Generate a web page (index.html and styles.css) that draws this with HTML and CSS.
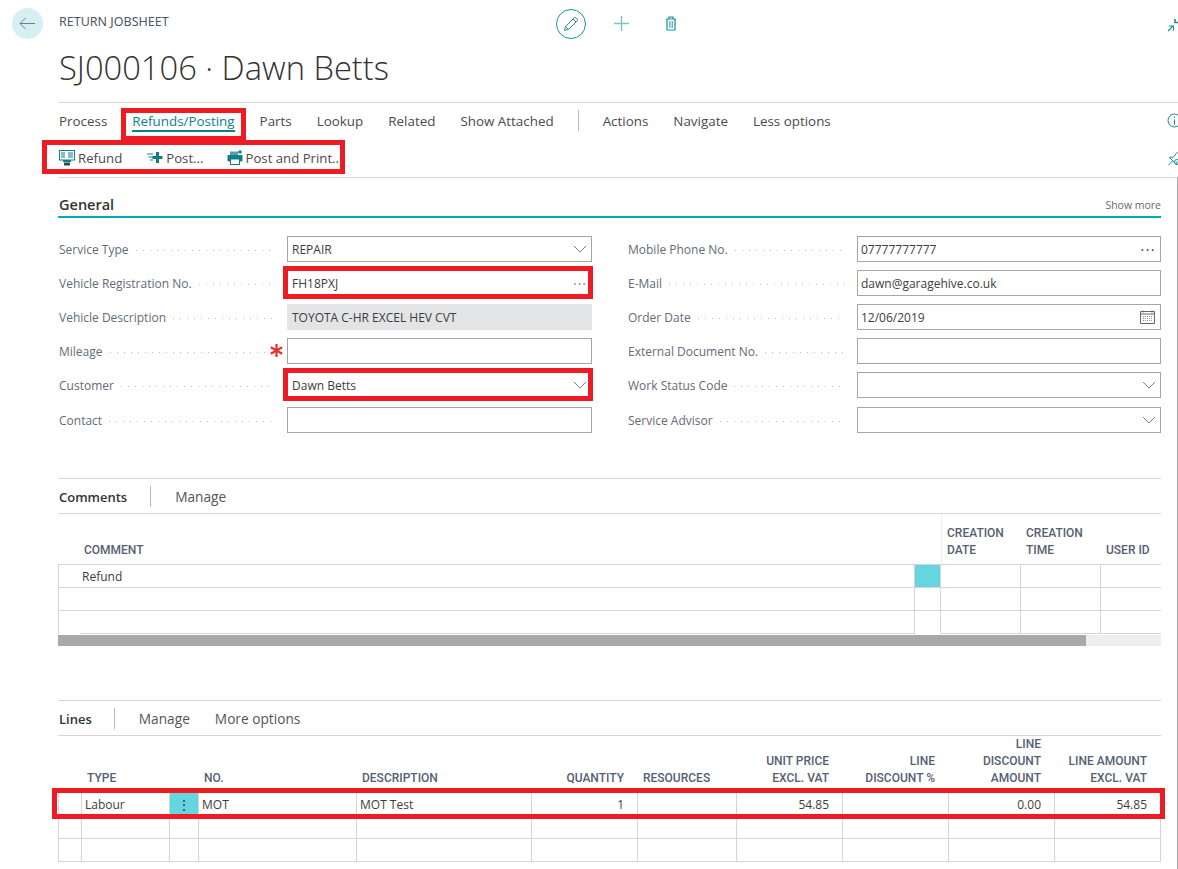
FILE: index.html
```html
<!DOCTYPE html>
<html lang="en">
<head>
    <meta charset="UTF-8">
    <meta name="viewport" content="width=device-width, initial-scale=1.0">
    <title>Return Jobsheet</title>
    <link rel="stylesheet" href="styles.css">
</head>
<body>
    <header class="head">
        <div class="head-top">
            <button class="back" type="button" aria-label="Back">
                <svg width="17" height="13" viewBox="0 0 17 13"><path d="M16 6.500H1M6.500 1 1 6.500 6.500 12" fill="none" stroke="#6f7f8c" stroke-width="1"/></svg>
            </button>
            <span class="crumb">RETURN JOBSHEET</span>
            <div class="head-actions">
                <span class="edit-ring">
                    <svg width="16" height="16" viewBox="0 0 16 16"><path d="M1.500 14.500 2.600 10.400 11.200 1.800a1.300 1.300 0 0 1 1.900 0l1.100 1.100a1.300 1.300 0 0 1 0 1.900L5.600 13.400ZM2.600 10.400l3 3M10 3l3 3" fill="none" stroke="#2f8f97" stroke-width="1"/></svg>
                </span>
                <svg class="act-plus" width="15" height="15" viewBox="0 0 15 15"><path d="M7.500 0v15M0 7.500h15" stroke="#7cc3c8" stroke-width="1.400"/></svg>
                <svg class="act-trash" width="12" height="15" viewBox="0 0 12 15"><path d="M1 3h10M4 3V1h4v2M2 3v11h8V3" fill="none" stroke="#1c8e97" stroke-width="1.200"/><path d="M4.500 5v7M6 5v7M7.500 5v7" stroke="#6db8be" stroke-width="1"/></svg>
            </div>
            <svg class="collapse" width="11" height="13" viewBox="0 0 11 13"><path d="M1 12 6 7M2 7h4.500v4.500" fill="none" stroke="#1c8e97" stroke-width="1.100"/><path d="M8 0v3.500h3" fill="none" stroke="#1c8e97" stroke-width="1.600"/></svg>
        </div>
        <h1>SJ000106 · Dawn Betts</h1>
    </header>

    <div class="menus">
        <nav class="tabs">
            <a>Process</a>
            <a class="tab-active">Refunds/Posting</a>
            <a>Parts</a>
            <a>Lookup</a>
            <a>Related</a>
            <a>Show Attached</a>
            <span class="tabs-sep"></span>
            <a>Actions</a>
            <a>Navigate</a>
            <a>Less options</a>
            <svg class="info" width="14" height="15" viewBox="0 0 14 15"><circle cx="7.500" cy="7.500" r="6.500" fill="none" stroke="#1c8e97" stroke-width="1"/><path d="M7.500 6.500v5M7.500 3.500v1.500" stroke="#1c8e97" stroke-width="1"/></svg>
        </nav>
        <div class="toolbar">
            <a class="tool">
                <svg width="16" height="16" viewBox="0 0 16 16"><rect x="0.500" y="0.500" width="15" height="9.500" fill="#fff" stroke="#0e7f88"/><path d="M2 3h4M2 5h4M2 7h4M9 3h5M9 5h5M9 7h5" stroke="#0e7f88"/><rect x="4" y="10" width="8" height="2" fill="#0e7f88"/><rect x="5" y="12.500" width="6" height="3" fill="#2b4a55"/></svg>
                Refund
            </a>
            <a class="tool tool-post">
                <svg width="16" height="13" viewBox="0 0 16 13"><path d="M0 3h6M1.500 6h4.500M3 9h3" stroke="#6aa9ae" stroke-width="1.300"/><path d="M10.500 1v11M5.500 6.500h10" stroke="#0e7f88" stroke-width="3"/></svg>
                Post...
            </a>
            <a class="tool tool-print">
                <svg width="16" height="15" viewBox="0 0 16 15"><rect x="3" y="1.500" width="8" height="4" fill="#5d9ea4"/><rect x="0.500" y="5" width="15" height="6.500" rx="1" fill="#0e7f88"/><rect x="3.500" y="9" width="9" height="5.500" fill="#fff" stroke="#0e7f88"/><path d="M13 0v4M11 2h4" stroke="#0e7f88" stroke-width="1.300"/></svg>
                Post and Print..
            </a>
            <svg class="pin" width="10" height="15" viewBox="0 0 10 15"><path d="M0 14.500 4.500 10M1.500 6.500l7 7M1.500 6.500l4 -.5L9.500 1M8.500 13.500l.5-3" fill="none" stroke="#1c8e97" stroke-width="1"/><circle cx="9" cy="11" r="2.500" fill="none" stroke="#1c8e97" stroke-width="1"/></svg>
        </div>
    </div>

    <main class="panel">
        <div class="section-head">
            <h2>General</h2>
            <a class="show-more">Show more</a>
        </div>

        <div class="fields">
            <div class="field">
                <label>Service Type</label>
                <div class="box"><span>REPAIR</span><svg class="chev" width="14" height="8" viewBox="0 0 14 8"><path d="M1 1l6 6 6-6" fill="none" stroke="#7a828d"/></svg></div>
            </div>
            <div class="field">
                <label>Mobile Phone No.</label>
                <div class="box"><span>07777777777</span><span class="more-dots">···</span></div>
            </div>
            <div class="field">
                <label>Vehicle Registration No.</label>
                <div class="box box-marked"><span>FH18PXJ</span><span class="more-dots dots-light">···</span></div>
            </div>
            <div class="field">
                <label>E-Mail</label>
                <div class="box"><span>dawn@garagehive.co.uk</span></div>
            </div>
            <div class="field">
                <label>Vehicle Description</label>
                <div class="box box-off"><span>TOYOTA C-HR EXCEL HEV CVT</span></div>
            </div>
            <div class="field">
                <label>Order Date</label>
                <div class="box"><span>12/06/2019</span>
                    <svg class="cal" width="15" height="14" viewBox="0 0 15 14"><path d="M.5 1.500h14v12H.5zM.5 4h14" fill="none" stroke="#5f6873"/><path d="M3 .5v2M12 .5v2" stroke="#5f6873"/><path d="M3 6.500h9M3 8.500h9M3 10.500h9" stroke="#8c939c" stroke-dasharray="1 1"/></svg>
                </div>
            </div>
            <div class="field">
                <label>Mileage</label>
                <div class="box">
                    <svg class="required" width="13" height="13" viewBox="0 0 13 13"><path d="M6.500 0v13M.8 3.200l11.400 6.600M.8 9.800l11.400-6.600" stroke="#e0352b" stroke-width="2.200"/></svg>
                </div>
            </div>
            <div class="field">
                <label>External Document No.</label>
                <div class="box"></div>
            </div>
            <div class="field">
                <label>Customer</label>
                <div class="box box-marked"><span>Dawn Betts</span><svg class="chev" width="14" height="8" viewBox="0 0 14 8"><path d="M1 1l6 6 6-6" fill="none" stroke="#7a828d"/></svg></div>
            </div>
            <div class="field">
                <label>Work Status Code</label>
                <div class="box"><span></span><svg class="chev" width="14" height="8" viewBox="0 0 14 8"><path d="M1 1l6 6 6-6" fill="none" stroke="#7a828d"/></svg></div>
            </div>
            <div class="field field-last">
                <label>Contact</label>
                <div class="box"></div>
            </div>
            <div class="field field-last">
                <label>Service Advisor</label>
                <div class="box"><span></span><svg class="chev" width="14" height="8" viewBox="0 0 14 8"><path d="M1 1l6 6 6-6" fill="none" stroke="#7a828d"/></svg></div>
            </div>
        </div>

        <section class="part part-comments">
            <div class="part-bar">
                <h3>Comments</h3>
                <span class="bar-sep"></span>
                <a>Manage</a>
            </div>
            <table class="grid grid-comments">
                <colgroup>
                    <col class="c-22"><col class="c-835"><col class="c-26"><col class="c-80"><col class="c-80"><col class="c-60">
                </colgroup>
                <thead>
                    <tr>
                        <th></th>
                        <th class="th-comment">COMMENT</th>
                        <th></th>
                        <th class="th-date">CREATION<br>DATE</th>
                        <th>CREATION<br>TIME</th>
                        <th>USER ID</th>
                    </tr>
                </thead>
                <tbody>
                    <tr><td></td><td class="td-comment">Refund</td><td class="td-teal"></td><td></td><td></td><td></td></tr>
                    <tr><td></td><td></td><td></td><td></td><td></td><td></td></tr>
                    <tr><td class="td-open"></td><td></td><td class="td-open"></td><td></td><td></td><td></td></tr>
                </tbody>
            </table>
            <div class="hscroll"><div class="hscroll-thumb"></div></div>
        </section>

        <section class="part part-lines">
            <div class="part-bar">
                <h3>Lines</h3>
                <span class="bar-sep"></span>
                <a>Manage</a>
                <a>More options</a>
            </div>
            <div class="lines-wrap">
                <table class="grid grid-lines">
                    <colgroup>
                        <col class="c-24"><col class="c-88"><col class="c-29"><col class="c-158"><col class="c-175"><col class="c-106"><col class="c-99"><col class="c-106"><col class="c-106"><col class="c-106"><col class="c-106">
                    </colgroup>
                    <thead>
                        <tr>
                            <th></th>
                            <th>TYPE</th>
                            <th></th>
                            <th>NO.</th>
                            <th>DESCRIPTION</th>
                            <th class="num">QUANTITY</th>
                            <th>RESOURCES</th>
                            <th class="num">UNIT PRICE<br>EXCL. VAT</th>
                            <th class="num">LINE<br>DISCOUNT %</th>
                            <th class="num">LINE<br>DISCOUNT<br>AMOUNT</th>
                            <th class="num">LINE AMOUNT<br>EXCL. VAT</th>
                        </tr>
                    </thead>
                    <tbody>
                        <tr>
                            <td></td>
                            <td>Labour</td>
                            <td class="td-teal td-menu">⋮</td>
                            <td>MOT</td>
                            <td>MOT Test</td>
                            <td class="num">1</td>
                            <td></td>
                            <td class="num">54.85</td>
                            <td></td>
                            <td class="num">0.00</td>
                            <td class="num">54.85</td>
                        </tr>
                        <tr><td></td><td></td><td></td><td></td><td></td><td></td><td></td><td></td><td></td><td></td><td></td></tr>
                        <tr><td></td><td></td><td></td><td></td><td></td><td></td><td></td><td></td><td></td><td></td><td></td></tr>
                    </tbody>
                </table>
                <div class="mark mark-row"></div>
            </div>
        </section>
    </main>
</body>
</html>
```

FILE: styles.css
```css
* {
    box-sizing: border-box;
}

html,
body {
    margin: 0;
    height: 869px;
    overflow: hidden;
}

body {
    font-family: "Open Sans", "Noto Sans", sans-serif;
    font-size: 12px;
    color: #333;
    background: #fff;
}

a {
    cursor: pointer;
}

/* page title area */
.head {
    height: 102px;
    padding: 8px 0 0 12px;
}

.head-top {
    display: flex;
    align-items: center;
    height: 31px;
}

.back {
    width: 31px;
    height: 31px;
    padding: 0;
    border: none;
    border-radius: 50%;
    background: #d6eff2;
    display: flex;
    align-items: center;
    justify-content: center;
}

.crumb {
    margin-left: 16px;
    width: 497px;
    font-family: "Noto Sans", sans-serif;
    font-size: 12.500px;
    font-weight: 400;
    color: #4d5666;
    margin-top: -4px;
}

.head-actions {
    display: flex;
    align-items: center;
}

.edit-ring {
    width: 30px;
    height: 30px;
    border: 1px solid #1c8e97;
    border-radius: 50%;
    display: flex;
    align-items: center;
    justify-content: center;
}

.act-plus {
    margin-left: 28px;
}

.act-trash {
    margin-left: 36px;
}

.collapse {
    margin-left: auto;
    margin-top: 4px;
}

h1 {
    margin: 6px 0 0 47px;
    font-size: 32.700px;
    font-weight: 300;
    line-height: 46px;
    color: #333;
    white-space: nowrap;
}

/* action menus */
.menus {
    margin-left: 58px;
    border-top: 1px solid #d5d5d8;
    height: 75px;
}

.tabs {
    height: 37px;
    display: flex;
    align-items: center;
    gap: 25px;
    padding: 0 0 2px 1px;
    font-size: 13.400px;
    color: #4a4a4a;
    position: relative;
    white-space: nowrap;
}

.tab-active {
    position: relative;
    color: #0e7f88;
}

.tab-active::after {
    content: "";
    position: absolute;
    left: 0;
    right: 0;
    bottom: -2px;
    height: 2px;
    background: #0e7f88;
}

/* red annotation boxes drawn on the screenshot */
.tab-active::before {
    content: "";
    position: absolute;
    left: -11px;
    right: -11px;
    top: -4px;
    bottom: -11px;
    border: 5px solid #ed1c24;
}

.tabs-sep {
    width: 1px;
    height: 21px;
    background: #b8b8bc;
    margin: 0 -1px 0 -1px;
}

.info {
    position: absolute;
    right: -3px;
    top: 10px;
}

.toolbar {
    position: relative;
    height: 37px;
    display: flex;
    align-items: center;
    padding: 0 0 2px 1px;
    font-size: 13.200px;
    color: #4a4a4a;
    white-space: nowrap;
}

.toolbar::after {
    content: "";
    position: absolute;
    left: -16px;
    top: 0;
    width: 293px;
    height: 24px;
    border: 5px solid #ed1c24;
}

.pin {
    position: absolute;
    right: 0;
    top: 11px;
}

.tool {
    display: flex;
    align-items: center;
    gap: 3px;
}

.tool-post {
    margin-left: 25px;
}

.tool-print {
    margin-left: 24px;
    gap: 2px;
}

/* main panel */
.panel {
    margin-left: 58px;
    height: 692px;
    padding-right: 16px;
    border-top: 1px solid #d5d5d8;
    border-right: 1px solid #a8a8a8;
}

.section-head {
    height: 40px;
    display: flex;
    align-items: center;
    justify-content: space-between;
    padding: 14px 0 0 1px;
    border-bottom: 2px solid #00aeb9;
}

h2 {
    margin: 0;
    font-size: 14.500px;
    font-weight: 600;
    color: #333;
}

.show-more {
    font-size: 10.500px;
    color: #5f6873;
    margin-top: 2px;
}

.fields {
    margin-top: 18px;
    display: grid;
    grid-template-columns: 534px 533px;
    column-gap: 36px;
    row-gap: 8px;
}

.field {
    display: flex;
    height: 26px;
}

.field-last {
    margin-top: 1px;
}

.field label {
    width: 229px;
    flex: none;
    display: flex;
    align-items: center;
    gap: 7px;
    padding: 0 12px 0 1px;
    color: #626b78;
    white-space: nowrap;
}

.field:nth-child(even) label {
    padding-left: 0;
}

.field label::after {
    content: "";
    flex: 1;
    height: 1px;
    margin-top: 3px;
    background-image: linear-gradient(to right, #bcc1c7 1px, transparent 1px);
    background-size: 7px 1px;
}

.box {
    position: relative;
    flex: 1;
    display: flex;
    align-items: center;
    justify-content: space-between;
    padding: 0 4px;
    border: 1px solid #a6a6a6;
    color: #3c3c3c;
    white-space: nowrap;
}

.field:nth-child(even) .box {
    padding-left: 3px;
}

.box-off {
    background: #e3e4e6;
    border-color: #e3e4e6;
}

.box-marked::after {
    content: "";
    position: absolute;
    left: -5px;
    right: -2px;
    top: -5px;
    bottom: -4px;
    border: 5px solid #ed1c24;
}

.more-dots {
    font-size: 14px;
    letter-spacing: 1.500px;
    color: #333;
}

.dots-light {
    color: #888;
    letter-spacing: 1px;
}

.cal {
    margin-right: 1px;
}

.required {
    position: absolute;
    left: -18px;
    top: 5px;
}

/* parts with a grid */
.part-comments {
    margin-top: 45px;
}

.part-lines {
    margin-top: 54px;
}

.part-bar {
    height: 36px;
    display: flex;
    align-items: center;
    gap: 25px;
    padding: 1px 0 0 1px;
    border-top: 1px solid #d5d5d8;
    border-bottom: 1px solid #d5d5d8;
    font-size: 13.700px;
    color: #555;
    white-space: nowrap;
}

.part-bar h3 {
    margin: 0;
    font-size: 13px;
    font-weight: 600;
    color: #333;
}

.bar-sep {
    width: 1px;
    height: 21px;
    margin: -1px -1px 0 -3px;
    background: #b8b8bc;
}

.part-comments .bar-sep {
    margin-left: -2px;
}

.grid {
    width: 1103px;
    table-layout: fixed;
    border-collapse: separate;
    border-spacing: 0;
}

.c-22 { width: 22px; }
.c-24 { width: 24px; }
.c-26 { width: 26px; }
.c-29 { width: 29px; }
.c-60 { width: 60px; }
.c-80 { width: 80px; }
.c-88 { width: 88px; }
.c-99 { width: 99px; }
.c-106 { width: 106px; }
.c-158 { width: 158px; }
.c-175 { width: 175px; }
.c-835 { width: 835px; }

.grid th {
    padding: 0 5px 5px;
    vertical-align: bottom;
    text-align: left;
    font-family: "Roboto", sans-serif;
    font-size: 12px;
    font-weight: 500;
    line-height: 17px;
    color: #566072;
    border-bottom: 1px solid #d5d5d8;
    white-space: nowrap;
}

.grid td {
    height: 23px;
    padding: 0 3px;
    color: #3c3c3c;
    border-bottom: 1px solid #d5d5d8;
    border-right: 1px solid #d5d5d8;
    white-space: nowrap;
}

.grid td:first-child {
    border-left: 1px solid #d5d5d8;
}

.grid .num {
    text-align: right;
    padding-right: 13px;
}

.grid th.num {
    padding-right: 14px;
}

.grid-comments thead tr {
    height: 51px;
}

.grid-comments .th-comment {
    padding-left: 4px;
}

.grid-comments .th-date {
    border-left: 1px solid #eeeef0;
}

.grid-comments th:last-child {
    padding-right: 0;
}

.grid-comments td:last-child,
.grid-comments td:first-child {
    border-right: none;
}

.grid-comments .td-comment {
    padding-left: 2px;
}

.grid-comments .td-open {
    border-bottom-color: transparent;
}

.grid .td-teal {
    background: #65d6df;
}

.grid .td-menu {
    text-align: center;
    font-size: 14px;
    color: #24445a;
    padding: 0;
}

.grid-lines thead tr {
    height: 57px;
}

.hscroll {
    height: 11px;
    margin-top: 1px;
    background: #eeeeee;
}

.hscroll-thumb {
    width: 1028px;
    height: 11px;
    background: #a9a9a9;
}

.lines-wrap {
    position: relative;
}

.mark {
    position: absolute;
    border: 5px solid #ed1c24;
}

.mark-row {
    left: -6px;
    right: -4px;
    top: 52px;
    height: 31px;
}
```
